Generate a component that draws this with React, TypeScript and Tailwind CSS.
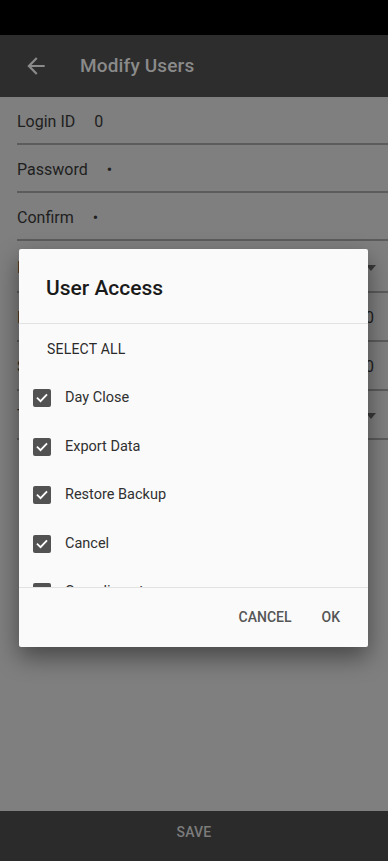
import React from 'react';

const fields = [
  { label: 'Login ID', value: '0', h: 'h-[48px]' },
  { label: 'Password', value: '•', h: 'h-[48px]' },
  { label: 'Confirm', value: '•', h: 'h-[48px]' },
  { label: 'Level', value: '', h: 'h-[52px]', dropdown: true },
  { label: 'Limit', value: '', h: 'h-[49px]', right: '0' },
  { label: 'Sales', value: '', h: 'h-[49px]', right: '0' },
  { label: 'Type', value: '', h: 'h-[49px]', dropdown: true },
];

const access = ['Day Close', 'Export Data', 'Restore Backup', 'Cancel', 'Complimentary', 'Reports'];

function Check() {
  return (
    <span className="w-[18px] h-[18px] rounded-[2px] bg-[#525252] flex items-center justify-center shrink-0">
      <svg width="14" height="14" viewBox="0 0 24 24" fill="none">
        <path d="M4.5 12.5l5 5L19.5 7" stroke="#ffffff" strokeWidth="3.2" strokeLinecap="square" />
      </svg>
    </span>
  );
}

export default function App() {
  return (
    <div
      className="relative w-[388px] h-[861px] flex flex-col overflow-hidden bg-[#7f7f7f]"
      style={{ fontFamily: 'Roboto, "Noto Sans", sans-serif' }}
    >
      <div className="h-[35px] bg-black shrink-0" />

      <header className="h-[62px] bg-[#2d2d2d] flex items-center shrink-0">
        <svg className="ml-[23px]" width="26" height="26" viewBox="0 0 24 24" fill="#8a8a8a">
          <path d="M20 11H7.83l5.59-5.59L12 4l-8 8 8 8 1.41-1.41L7.83 13H20v-2z" />
        </svg>
        <h1 className="ml-[31px] text-[19px] font-medium text-[#8a8a8a] tracking-[0.15px]">Modify Users</h1>
      </header>

      <main className="flex-1 pl-[17px]">
        {fields.map((f) => (
          <div key={f.label} className={`${f.h} pt-[3px] flex items-center border-b-2 border-[#5c5c5c] text-[16px] text-[#1e1e1e]`}>
            <span>{f.label}</span>
            {f.value && <span className="ml-[19px]">{f.value}</span>}
            <span className="flex-1" />
            {f.dropdown && (
              <svg className="mr-[12px]" width="10" height="6" viewBox="0 0 10 6" fill="#3a3a3a">
                <path d="M0 0h10L5 6z" />
              </svg>
            )}
            {f.right && <span className="mr-[14px]">{f.right}</span>}
          </div>
        ))}
      </main>

      <footer className="h-[50px] pb-[8px] bg-[#2b2b2b] flex items-center justify-center shrink-0">
        <span className="text-[14px] font-medium text-[#7c7c7c] tracking-[0.2px]">SAVE</span>
      </footer>

      <div className="absolute left-[19px] top-[249px] w-[349px] h-[398px] bg-[#fafafa] rounded-[2px] shadow-[0_10px_24px_rgba(0,0,0,0.45)] flex flex-col">
        <div className="h-[74px] pl-[27px] pt-[25px] shrink-0">
          <h2 className="text-[21px] leading-[28px] font-medium text-[#1a1a1a]">User Access</h2>
        </div>
        <div className="h-px bg-[#e2e2e2] shrink-0" />
        <div className="h-[263px] pt-[1px] overflow-hidden shrink-0">
          <div className="h-[49px] flex items-center pl-[28px] text-[14px] text-[#2a2a2a] tracking-[0.2px]">SELECT ALL</div>
          {access.map((a) => (
            <div key={a} className="h-[48.5px] flex items-center pl-[14px] gap-[14px] text-[14.5px] text-[#303030]">
              <Check />
              <span>{a}</span>
            </div>
          ))}
        </div>
        <div className="h-px bg-[#e2e2e2] shrink-0" />
        <div className="flex-1 flex items-center justify-end pr-[28px] gap-[30px] text-[14px] font-medium text-[#555555]">
          <span>CANCEL</span>
          <span>OK</span>
        </div>
      </div>
    </div>
  );
}
